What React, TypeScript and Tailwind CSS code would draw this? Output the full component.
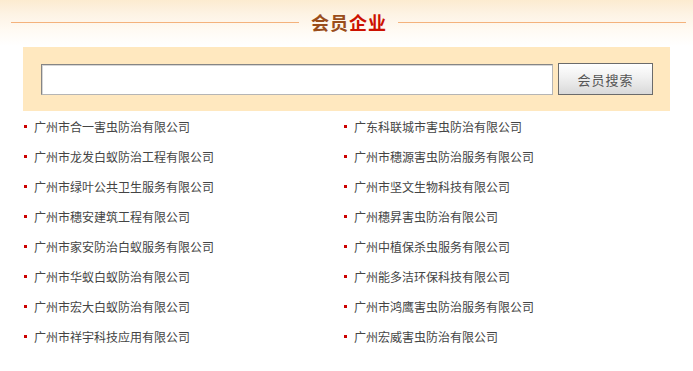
import React from 'react';

// 会员企业列表
const companies: string[] = [
  '广州市合一害虫防治有限公司',
  '广东科联城市害虫防治有限公司',
  '广州市龙发白蚁防治工程有限公司',
  '广州市穗源害虫防治服务有限公司',
  '广州市绿叶公共卫生服务有限公司',
  '广州市坚文生物科技有限公司',
  '广州市穗安建筑工程有限公司',
  '广州穗昇害虫防治有限公司',
  '广州市家安防治白蚁服务有限公司',
  '广州中植保杀虫服务有限公司',
  '广州市华蚁白蚁防治有限公司',
  '广州能多洁环保科技有限公司',
  '广州市宏大白蚁防治有限公司',
  '广州市鸿鹰害虫防治服务有限公司',
  '广州市祥宇科技应用有限公司',
  '广州宏威害虫防治有限公司',
];

export default function App() {
  return (
    <div
      className="w-[693px] h-[371px] overflow-hidden bg-[linear-gradient(to_bottom,#fcebd0_0px,#fdf3e4_14px,#fffaf3_30px,#ffffff_46px)]"
      style={{ fontFamily: '"Noto Sans CJK SC", "Liberation Sans", sans-serif' }}
    >
      {/* 标题 */}
      <header className="h-[44px] flex items-center pl-[11px] pr-[7px] gap-[12px]">
        <div className="flex-1 h-px bg-[#f4b27c]" />
        <h2 className="text-[18px] font-bold leading-none tracking-[1px] w-[75px] whitespace-nowrap">
          <span className="text-[#9a4d1b]">会员</span>
          <span className="text-[#cc1100]">企业</span>
        </h2>
        <div className="flex-1 h-px bg-[#f4b27c]" />
      </header>

      {/* 搜索 */}
      <div className="mt-[3px] mx-[23px] h-[64px] bg-[#ffe8bf] flex items-center pl-[18px] gap-[5px]">
        <input
          type="text"
          className="w-[512px] h-[31px] bg-white border border-t-[#858585] border-l-[#858585] border-r-[#b5b5b5] border-b-[#b5b5b5] shadow-[inset_1px_1px_0_#d6d6d6] outline-none px-1 text-[12px]"
        />
        <button className="w-[95px] h-[32px] border border-[#6b6b6b] bg-[linear-gradient(to_bottom,#ffffff,#f0f0f0_45%,#d9d9d9)] text-[13px] text-[#555] tracking-[1px] leading-none">
          会员搜索
        </button>
      </div>

      {/* 列表 */}
      <ul className="pt-[1px] pl-[24px] grid grid-cols-[320px_320px]">
        {companies.map((name) => (
          <li key={name} className="h-[30px] flex items-center gap-[7px]">
            <span className="w-[3px] h-[3px] bg-[#cc0000] -mt-[1px]" />
            <span className="text-[12px] text-[#444] leading-none whitespace-nowrap">{name}</span>
          </li>
        ))}
      </ul>
    </div>
  );
}
